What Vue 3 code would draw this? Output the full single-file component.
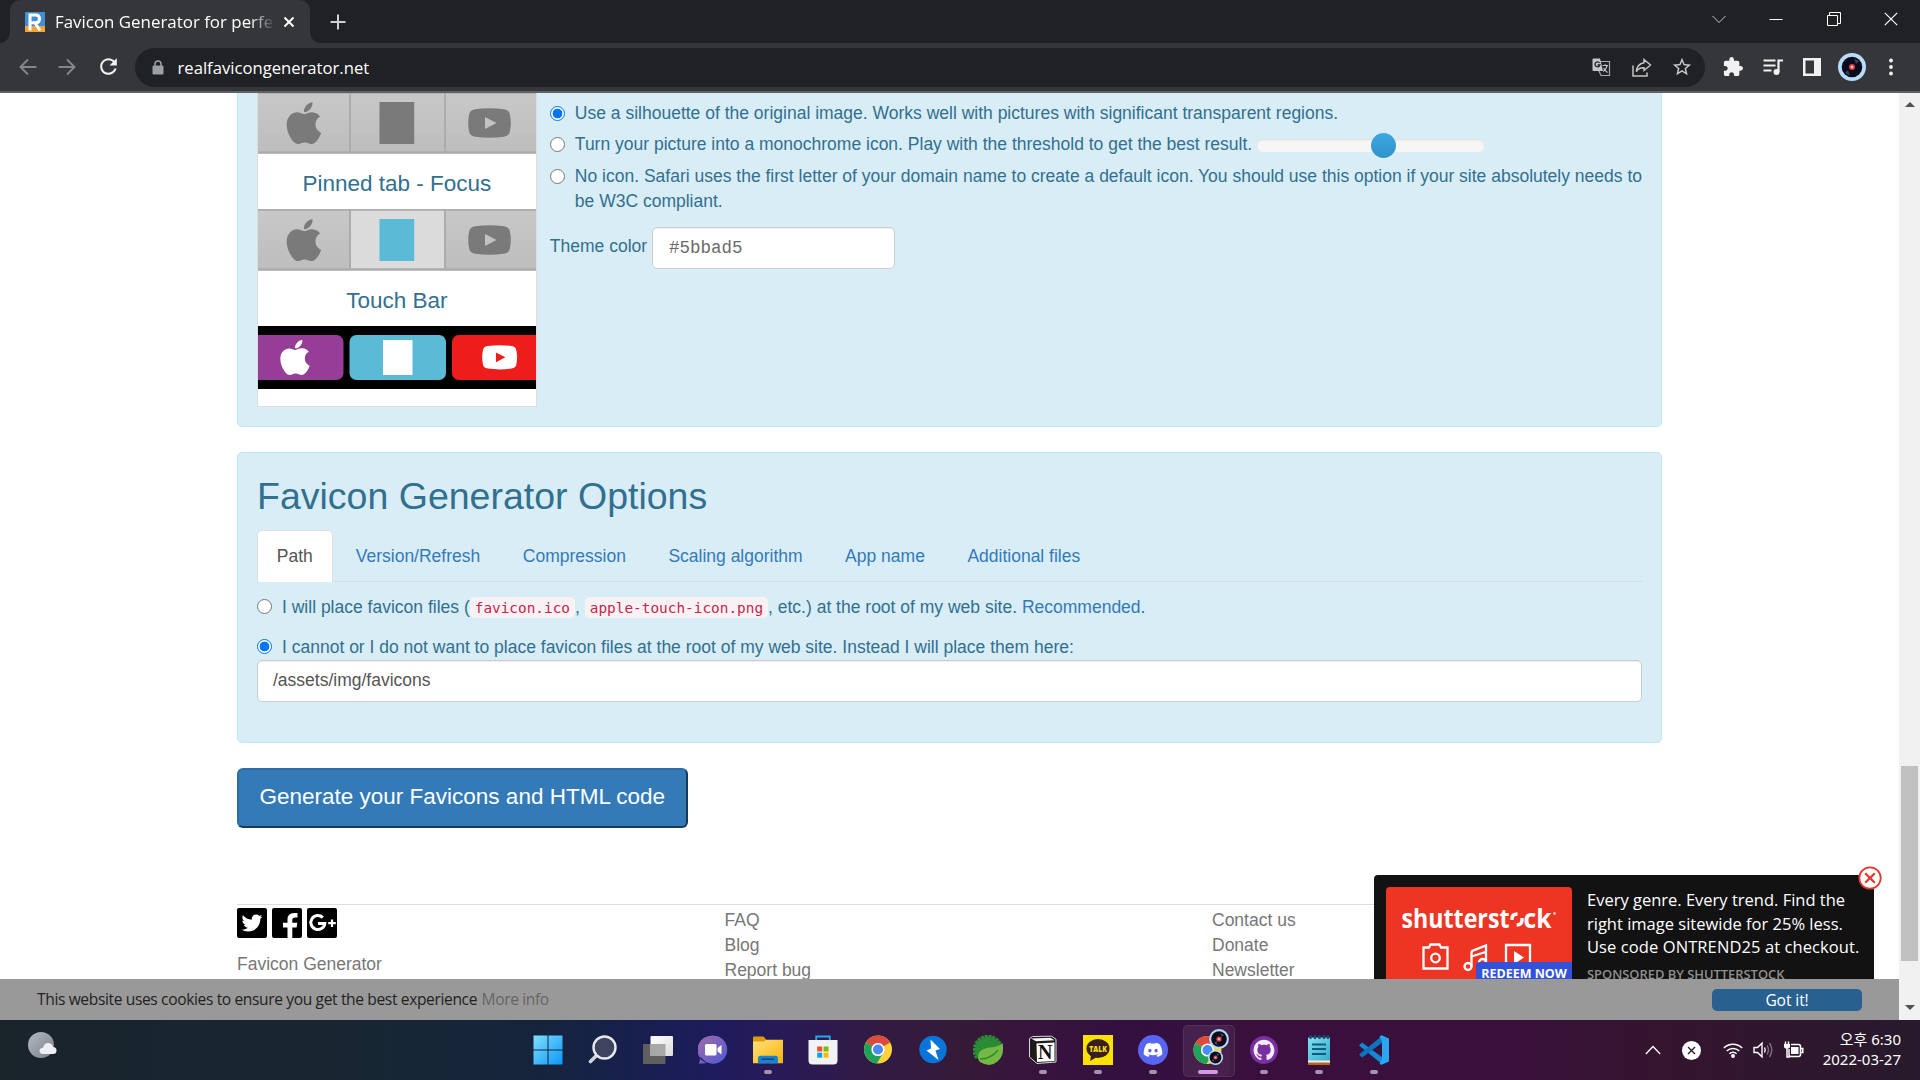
<script setup>
const tabs = ['Path', 'Version/Refresh', 'Compression', 'Scaling algorithm', 'App name', 'Additional files']
const apple = 'M318.7 268.7c-.2-36.7 16.4-64.4 50-84.8-18.8-26.9-47.2-41.7-84.7-44.6-35.5-2.8-74.3 20.7-88.5 20.7-15 0-49.4-19.7-76.4-19.7C63.3 141.2 4 184.8 4 273.5q0 39.3 14.4 81.2c12.8 36.7 59 126.7 107.2 125.2 25.2-.6 43-17.9 75.8-17.9 31.8 0 48.3 17.9 76.4 17.9 48.6-.7 90.4-82.5 102.6-119.3-65.2-30.7-61.7-90-61.7-91.9zm-56.6-164.2c27.3-32.4 24.8-61.9 24-72.5-24.1 1.4-52 16.4-67.9 34.9-17.5 19.8-27.8 44.3-25.6 71.9 26.1 2 49.9-11.4 69.5-34.3z'
const youtube = 'M7 1.2Q21.5-.8 36 1.2q5.6.8 6 6Q43.6 15 42 22.8q-.4 5.2-6 6Q21.5 30.8 7 28.8q-5.6-.8-6-6Q-.6 15 1 7.2q.4-5.2 6-6zM17 9v12l11.5-6z'
const pinnedRows = [false, true]
const gear = Array.from({ length: 12 }, (_, i) => 150 + i * 16)
const badges = [[12, 10, 1], [8.5, 28.5, 0.76]]
</script>

<template>
  <div class="screen">
    <header class="strip">
      <div class="tab">
        <svg class="fav" width="20" height="20" viewBox="0 0 20 20"><rect width="20" height="14" fill="#3f8fd2" /><rect y="14" width="20" height="6" fill="#f0a63c" /><path d="M5 18.500V3h5.500q4 0 4 3.900 0 3.800-4 3.900H6M10 11l5 7.500" fill="none" stroke="#fff" stroke-width="3" /></svg>
        <span class="title">Favicon Generator for perfe</span>
        <svg width="12" height="12" viewBox="0 0 12 12"><path d="M1.500 1.500l9 9m0-9l-9 9" stroke="#fff" stroke-width="1.900" /></svg>
      </div>
      <svg class="plus" width="16" height="16" viewBox="0 0 16 16"><path d="M8 .5v15M.5 8h15" stroke="#d0d1d4" stroke-width="2" /></svg>
      <div class="win">
        <svg width="14" height="14" viewBox="0 0 14 14"><path d="M.5 4l6.500 6.500L13.500 4" stroke="#c9cacc" /></svg>
        <svg width="14" height="14" viewBox="0 0 14 14"><path d="M.5 7.500h13" stroke="#fff" /></svg>
        <svg width="14" height="14" viewBox="0 0 14 14"><path d="M.5 3.500h10v10H.5zM2.500 3V.5h11v11H11" stroke="#fff" /></svg>
        <svg width="14" height="14" viewBox="0 0 14 14"><path d="M.8.8l12.400 12.400m0-12.400L.8 13.200" stroke="#fff" stroke-width="1.200" /></svg>
      </div>
    </header>

    <div class="toolbar">
      <div class="nav">
        <svg width="18" height="18" viewBox="0 0 18 18"><path d="M17.500 9H2M9 1.500L1.500 9 9 16.500" fill="none" stroke="#85868a" stroke-width="1.900" /></svg>
        <svg width="18" height="18" viewBox="0 0 18 18"><path d="M.5 9H16M9 1.500L16.500 9 9 16.500" fill="none" stroke="#85868a" stroke-width="1.900" /></svg>
        <svg width="25" height="25" viewBox="0 0 24 24"><path fill="#f1f1f2" d="M17.650 6.350C16.200 4.900 14.210 4 12 4c-4.420 0-7.990 3.580-7.990 8s3.570 8 7.990 8c3.730 0 6.840-2.550 7.730-6h-2.080c-.82 2.330-3.040 4-5.650 4-3.310 0-6-2.690-6-6s2.690-6 6-6c1.660 0 3.140.69 4.220 1.780L13 11h7V4l-2.350 2.350z" /></svg>
      </div>
      <div class="omni">
        <svg width="12" height="15" viewBox="0 0 12 15"><rect x=".5" y="5.500" width="11" height="9" rx="1.200" fill="#9aa0a6" /><path d="M3 6V4a3 3 0 016 0v2" fill="none" stroke="#9aa0a6" stroke-width="1.500" /></svg>
        <span class="url">realfavicongenerator.net</span>
        <div class="oicons">
          <svg width="19" height="19" viewBox="0 0 19 19"><path d="M8 3.500h9.500v14H9L6.500 12" fill="none" stroke="#a9aaad" stroke-width="1.200" /><path d="M1.500.5H8l3 12.500H1.500q-1 0-1-1V1.500q0-1 1-1z" fill="#c5c6c8" /><path d="M7.600 5A2.500 2.500 0 107.900 7H5.600" fill="none" stroke="#202124" stroke-width="1.300" /><path d="M10.500 7.500H16m-2.800-1.300v1.300m2 0q-1 4-4 6m.3-3.500q1.500 3 4 4.500" fill="none" stroke="#c5c6c8" stroke-width="1.100" /></svg>
          <svg width="20" height="19" viewBox="0 0 20 19"><path d="M1 7.500V18h14v-3.500M12 1.500l6.500 5.500-6.500 5.500V9.800Q7 9.500 4.300 13.500 5 6 12 4.700z" fill="none" stroke="#c3c4c6" stroke-width="1.500" /></svg>
          <svg width="22" height="22" viewBox="0 0 24 24"><path fill="#c9cacc" d="M22 9.240l-7.190-.62L12 2 9.190 8.630 2 9.240l5.460 4.730L5.820 21 12 17.270 18.180 21l-1.630-7.030L22 9.240zM12 15.400l-3.760 2.270 1-4.280-3.320-2.880 4.380-.38L12 6.100l1.710 4.040 4.380.38-3.320 2.880 1 4.280L12 15.400z" /></svg>
        </div>
      </div>
      <div class="ext">
        <svg width="20" height="20" viewBox="1 1 22 22"><path fill="#f1f1f2" d="M20.500 11H19V7c0-1.100-.9-2-2-2h-4V3.500C13 2.120 11.880 1 10.500 1S8 2.120 8 3.500V5H4c-1.100 0-1.990.9-1.990 2v3.800H3.500c1.490 0 2.700 1.210 2.700 2.700s-1.210 2.700-2.700 2.700H2V20c0 1.100.9 2 2 2h3.800v-1.500c0-1.490 1.210-2.700 2.700-2.700 1.490 0 2.700 1.210 2.700 2.700V22H17c1.100 0 2-.9 2-2v-4h1.500c1.380 0 2.500-1.120 2.500-2.500S21.880 11 20.500 11z" /></svg>
        <svg width="20" height="18" viewBox="0 0 20 18"><path d="M.5 2.500h12M.5 7.500h12M.5 12.500h8" stroke="#f1f1f2" stroke-width="2.200" /><path d="M15.500 14V2.500H20" fill="none" stroke="#f1f1f2" stroke-width="2.200" /><circle cx="13.500" cy="14" r="3" fill="#f1f1f2" /></svg>
        <svg width="18" height="18" viewBox="0 0 18 18"><path d="M0 0h18v18H0zM2.500 2.500v13H11v-13z" fill-rule="evenodd" fill="#f1f1f2" /></svg>
        <svg width="28" height="28" viewBox="0 0 28 28"><circle cx="14" cy="14" r="14" fill="#b7dcf8" /><circle cx="14" cy="14" r="10.300" fill="#0a0b1c" /><path d="M16 5.500l5 2.500-3 3zM12 22.500l-5-2.500 3-3z" fill="#3d3f55" /><circle cx="14" cy="14" r="3" fill="#e8335d" /><circle cx="14" cy="14" r="1.400" fill="#ffd15c" /></svg>
        <svg width="4" height="18" viewBox="0 0 4 18"><circle cx="2" cy="2.500" r="1.900" fill="#f1f1f2" /><circle cx="2" cy="9" r="1.900" fill="#f1f1f2" /><circle cx="2" cy="15.500" r="1.900" fill="#f1f1f2" /></svg>
      </div>
    </div>

    <div class="view">
      <main class="page">
        <section class="panel first">
          <div class="preview">
            <template v-for="focus in pinnedRows" :key="focus">
              <h4 v-if="focus">Pinned tab - Focus</h4>
              <svg class="strip-img" :class="{ cut: !focus }" width="278" height="62" viewBox="0 0 278 62">
                <defs><linearGradient id="steel" x2="0" y2="1"><stop stop-color="#c8c8c8" /><stop offset="1" stop-color="#bdbdbd" /></linearGradient></defs>
                <rect width="278" height="62" fill="url(#steel)" />
                <rect v-if="focus" x="93" width="93" height="62" fill="#dadbda" />
                <path d="M0 .8h278M0 60.300h278M92 0v60M187 0v60" stroke="#acacac" stroke-width="2" />
                <path d="M0 61.700h278" stroke="#b9c0b4" stroke-width="1" />
                <path :d="apple" fill="#7a7a7a" transform="translate(28.300 7.200) scale(.0915 .0935)" />
                <rect x="121.500" y="10" width="34.700" height="42" :fill="focus ? '#5bbad5' : '#7a7a7a'" />
                <path :d="youtube" fill="#7a7a7a" fill-rule="evenodd" transform="translate(210 16)" />
              </svg>
            </template>
            <h4>Touch Bar</h4>
            <svg class="strip-img" width="278" height="63" viewBox="0 0 278 63">
              <rect width="278" height="63" />
              <rect x="-20" y="9" width="105.500" height="45" rx="7" fill="#963d97" />
              <rect x="91.500" y="9" width="96.500" height="45" rx="7" fill="#5bbad5" />
              <rect x="194" y="9" width="110" height="45" rx="7" fill="#ef1c1c" />
              <path :d="apple" fill="#fff" transform="translate(22 11.500) scale(.078)" />
              <rect x="125" y="14" width="29.500" height="35" fill="#fff" />
              <path :d="youtube" fill="#fff" fill-rule="evenodd" transform="translate(224 19) scale(.82)" />
            </svg>
          </div>
          <div class="opts">
            <div class="radio"><i class="dot on"></i><span>Use a silhouette of the original image. Works well with pictures with significant transparent regions.</span></div>
            <div class="radio"><i class="dot"></i><span>Turn your picture into a monochrome icon. Play with the threshold to get the best result.</span><div class="slider"><b></b></div></div>
            <div class="radio last"><i class="dot"></i><span>No icon. Safari uses the first letter of your domain name to create a default icon. You should use this option if your site absolutely needs to<br>be W3C compliant.</span></div>
            <div class="theme"><span>Theme color</span><div class="field mono">#5bbad5</div></div>
          </div>
        </section>

        <section class="panel second">
          <h2>Favicon Generator Options</h2>
          <nav class="tabs"><a v-for="(t, i) in tabs" :key="t" :class="{ active: i === 0 }">{{ t }}</a></nav>
          <div class="radio path"><i class="dot"></i><span>I will place favicon files (<code>favicon.ico</code>, <code>apple-touch-icon.png</code>, etc.) at the root of my web site. <a>Recommended</a>.</span></div>
          <div class="radio path"><i class="dot on"></i><span>I cannot or I do not want to place favicon files at the root of my web site. Instead I will place them here:</span></div>
          <div class="field wide">/assets/img/favicons</div>
        </section>

        <div class="generate">Generate your Favicons and HTML code</div>

        <footer>
          <div>
            <div class="social">
              <svg width="30" height="30" viewBox="0 0 30 30"><rect width="30" height="30" rx="2" /><path fill="#fff" transform="translate(4.500 4.500) scale(.041)" d="M459.370 151.716c.325 4.548.325 9.097.325 13.645 0 138.720-105.583 298.558-298.558 298.558-59.452 0-114.680-17.219-161.137-47.106 8.447.974 16.568 1.299 25.340 1.299 49.055 0 94.213-16.568 130.274-44.832-46.132-.975-84.792-31.188-98.112-72.772 6.498.974 12.995 1.624 19.818 1.624 9.421 0 18.843-1.300 27.614-3.573-48.081-9.747-84.143-51.980-84.143-102.985v-1.299c13.969 7.797 30.214 12.670 47.431 13.319-28.264-18.843-46.781-51.005-46.781-87.391 0-19.492 5.197-37.360 14.294-52.954 51.655 63.675 129.300 105.258 216.365 109.807-1.624-7.797-2.599-15.918-2.599-24.040 0-57.828 46.782-104.934 104.934-104.934 30.213 0 57.502 12.670 76.670 33.137 23.715-4.548 46.456-13.320 66.599-25.340-7.798 24.366-24.366 44.833-46.132 57.827 21.117-2.273 41.584-8.122 60.426-16.243-14.292 20.791-32.161 39.308-52.628 54.253z" /></svg>
              <svg width="30" height="30" viewBox="0 0 30 30"><rect width="30" height="30" rx="2" /><path d="M15.500 30V19.500H11v-4.700h4.500v-3.300Q15.500 5 22 5h3.500v4.500H23q-2.700 0-2.700 2.500v2.800h5l-.7 4.700h-4.300V30z" fill="#fff" /></svg>
              <svg width="30" height="30" viewBox="0 0 30 30"><rect width="30" height="30" rx="2" /><path d="M15.800 9.600A7 7 0 1017.800 15.500H11" fill="none" stroke="#fff" stroke-width="3" /><path d="M25 11.500v7.500M21.200 15.200h7.600" stroke="#fff" stroke-width="2.200" /></svg>
            </div>
            <p>Favicon Generator</p>
          </div>
          <ul><li>FAQ</li><li>Blog</li><li>Report bug</li></ul>
          <ul><li>Contact us</li><li>Donate</li><li>Newsletter</li></ul>
        </footer>

        <aside class="ad">
          <div class="art">
            <svg width="186" height="92" viewBox="0 0 186 92">
              <g fill="#fff" font-family="Open Sans, sans-serif" font-weight="700" font-size="27.500">
                <text x="15.500" y="40.500" textLength="108" lengthAdjust="spacingAndGlyphs">shutterst</text>
                <text x="137.500" y="40.500" textLength="28" lengthAdjust="spacingAndGlyphs">ck</text>
              </g>
              <path d="M126 33v-1.500q0-4.500 5.500-4.500M136 31v2.300q0 4.700-5.300 4.700" fill="none" stroke="#fff" stroke-width="3.400" />
              <circle cx="168.500" cy="26.500" r="1.400" fill="#fbb" />
              <g fill="none" stroke="#fff" stroke-width="2.300">
                <path d="M37.500 60.500h5.500l1.500-3h9l1.500 3h6.500v21h-24z" /><circle cx="49.500" cy="71" r="4.300" />
                <circle cx="82" cy="79.500" r="3.500" /><circle cx="96.500" cy="75.500" r="3.500" /><path d="M85.500 79.500V66q0-2 2-2.600L100 58.500v17M85.500 69.500l14-4.500" />
                <path d="M120 58h24v24h-24z" />
              </g>
              <path d="M128 64v13l10-6.500z" fill="#fff" />
            </svg>
            <span class="redeem">REDEEM NOW</span>
          </div>
          <div class="copy">Every genre. Every trend. Find the<br>right image sitewide for 25% less.<br><span>Use code ONTREND25 at checkout.</span><small>SPONSORED BY SHUTTERSTOCK</small></div>
          <svg class="x" width="24" height="24" viewBox="0 0 24 24"><circle cx="12" cy="12" r="10.700" fill="#fff" stroke="#e5392b" stroke-width="1.800" /><path d="M7.200 7.200l9.600 9.600m0-9.600l-9.600 9.600" stroke="#e5392b" stroke-width="2.300" /></svg>
        </aside>

        <div class="cookies"><span class="msg">This website uses cookies to ensure you get the best experience</span><span class="more">More info</span><span class="got">Got it!</span></div>
      </main>
      <div class="scroll">
        <svg width="10" height="5" viewBox="0 0 10 5"><path d="M0 5l5-5 5 5z" fill="#505050" /></svg>
        <i></i>
        <svg class="down" width="10" height="5" viewBox="0 0 10 5"><path d="M0 0l5 5 5-5z" fill="#505050" /></svg>
      </div>
    </div>

    <div class="taskbar">
      <svg class="weather" width="30" height="28" viewBox="0 0 30 28"><defs><linearGradient id="moon" x2="1" y2="1"><stop stop-color="#b4b9c4" /><stop offset="1" stop-color="#7b818b" /></linearGradient></defs><circle cx="13" cy="14" r="13" fill="url(#moon)" /><path d="M15 23q-3.500 0-3.500-3t3.500-3.300Q16 12 20 12t5 4q3.500 0 3.500 3.500T25 23z" fill="#eef0f4" /></svg>
      <div class="apps">
        <div class="app"><svg viewBox="0 0 30 30"><defs><linearGradient id="wn" x2="1" y2="1"><stop stop-color="#7fe0ff" /><stop offset="1" stop-color="#0a96f8" /></linearGradient></defs><path d="M.5.500h14v14H.5zM15.500.500h14v14h-14zM.5 15.500h14v14H.5zM15.500 15.500h14v14h-14z" fill="url(#wn)" /></svg></div>
        <div class="app"><svg viewBox="0 0 30 30"><path d="M8.500 20.500L2.500 26.500" stroke="#cfd3d8" stroke-width="3.600" stroke-linecap="round" /><circle cx="16.500" cy="12.500" r="11" fill="#3e4460" stroke="#e8eaed" stroke-width="2.400" /></svg></div>
        <div class="app"><svg viewBox="0 0 30 30"><defs><linearGradient id="tv" x2="1" y2="1"><stop stop-color="#fff" /><stop offset="1" stop-color="#dcdcdc" /></linearGradient></defs><rect x="0" y="9" width="22.500" height="20" rx="1" fill="#5f5f5f" /><rect x="7.500" y="1" width="22.500" height="20" rx="1" fill="url(#tv)" /><path d="M7.500 9h15v12h-15z" fill="#a8a8a8" /></svg></div>
        <div class="app"><svg viewBox="0 0 30 30"><defs><linearGradient id="ch" x2="1" y2="1"><stop stop-color="#a06ba8" /><stop offset="1" stop-color="#5059d8" /></linearGradient></defs><path d="M15 .8A14 14 0 112.900 21.500L1 28.800l8-.8A14 14 0 0115 .8z" fill="url(#ch)" /><circle cx="15" cy="14.500" r="13.800" fill="url(#ch)" /><rect x="7" y="9" width="11.500" height="11.500" rx="1.500" fill="#fff" /><path d="M19.500 13l4-3v9.500l-4-3z" fill="#fff" /></svg></div>
        <div class="app run"><svg viewBox="0 0 30 30"><defs><linearGradient id="fo" x2="1" y2="1"><stop stop-color="#ffe07a" /><stop offset="1" stop-color="#f8b50a" /></linearGradient></defs><path d="M0 2.500q0-1 1-1h9.500l3 3.500v5H0z" fill="#dd9b0b" /><path d="M0 6.500h11l2-1.800h17v23.500H0z" fill="url(#fo)" /><path d="M5 28.200v-5q0-2.500 2.500-2.500h15q2.500 0 2.500 2.500v5z" fill="#1a82d2" /><path d="M8.500 24.200h13" stroke="#0c4a80" stroke-width="1.500" /></svg></div>
        <div class="app"><svg viewBox="0 0 30 30"><path d="M8.200 6V1.500h13.600V6" fill="none" stroke="#27a9e8" stroke-width="1.800" /><path d="M.5 5h29v20.500q0 4-4 4h-21q-4 0-4-4z" fill="#f1f2f3" /><path d="M9.200 11.500h5v5h-5z" fill="#f25022" /><path d="M15.500 11.500h5v5h-5z" fill="#7fba00" /><path d="M9.200 17.700h5v5h-5z" fill="#00a4ef" /><path d="M15.500 17.700h5v5h-5z" fill="#ffb900" /></svg></div>
        <div class="app"><svg viewBox="0 0 30 30"><circle cx="15" cy="14.500" r="14" fill="#fdd33b" /><path d="M15 14.500L2.900 7.500a14 14 0 0112-7q8.300 0 12.300 7z" fill="#dc4a3d" /><path d="M2.900 7.500a14 14 0 0011 21l6.500-11L15 14.500z" fill="#1fa35c" /><circle cx="15" cy="14.500" r="6.600" fill="#fff" /><circle cx="15" cy="14.500" r="5" fill="#4a8af4" /></svg></div>
        <div class="app"><svg viewBox="0 0 30 30"><circle cx="15" cy="14.500" r="13.700" fill="#0a74d8" /><path d="M12.500 4.500l9.500 9.500-4.500 1.500 3 9.500-12-9.500 4.500-2z" fill="#fff" /></svg></div>
        <div class="app"><svg viewBox="0 0 30 30"><circle cx="15" cy="15" r="13" fill="#2b8a34" /><rect v-for="a in gear" :key="a" x="27" y="13.500" width="3.200" height="3.200" fill="#2b8a34" :transform="`rotate(${a} 15 15)`" /><path d="M29.500 8q2.500 12-5 18.500T7 27Q4 24 5.500 19T16 12.500q8 0 13.500-4.500z" fill="#74b943" /><path d="M7 24q11 0 18-9" fill="none" stroke="#2b8a34" stroke-width="1.300" /></svg></div>
        <div class="app run"><svg viewBox="0 0 30 30"><path d="M1.500 3.500L4.500 1.500l19-.3 4.500 3V27L9 28.500 1.500 22z" fill="#1c1c1c" stroke="#d8d8d8" stroke-width="1" /><path d="M3 3.500l19.500-.8 4 2.500-18.500 1z" fill="#f4f4f4" /><path d="M8.500 8.500l18-1v18.500L9 27z" fill="#fff" /><text x="10" y="24" font-family="Liberation Serif, serif" font-weight="700" font-size="20" fill="#111">N</text></svg></div>
        <div class="app run"><svg viewBox="0 0 30 30"><path d="M0 0h30v30H0z" fill="#fae100" /><ellipse cx="15" cy="13.500" rx="11.500" ry="9.500" fill="#381e1e" /><path d="M8 20l-.8 6 6.500-4z" fill="#381e1e" /><text x="6.300" y="17" font-family="Open Sans, sans-serif" font-weight="800" font-size="8.500" fill="#fae100" textLength="17.500" lengthAdjust="spacingAndGlyphs">TALK</text></svg></div>
        <div class="app run"><svg viewBox="0 0 30 30"><circle cx="15" cy="15" r="15" fill="#5865f2" /><path fill="#fff" transform="translate(5.700 5.500) scale(.775)" d="M20.317 4.370a19.791 19.791 0 00-4.885-1.515.074.074 0 00-.079.037c-.211.375-.445.865-.608 1.250-1.845-.276-3.680-.276-5.487 0-.164-.393-.406-.874-.618-1.250a.077.077 0 00-.079-.037 19.736 19.736 0 00-4.885 1.515.070.070 0 00-.032.028C.533 9.046-.319 13.580.099 18.058a.082.082 0 00.031.056c2.053 1.508 4.041 2.423 5.993 3.029a.078.078 0 00.084-.028c.462-.630.873-1.295 1.226-1.994a.076.076 0 00-.042-.106c-.653-.248-1.274-.550-1.872-.892a.077.077 0 01-.008-.128c.126-.094.252-.192.372-.291a.074.074 0 01.078-.011c3.928 1.793 8.180 1.793 12.061 0a.074.074 0 01.079.010c.120.099.246.198.373.292a.077.077 0 01-.007.128 12.299 12.299 0 01-1.873.891.077.077 0 00-.041.107c.360.698.772 1.363 1.225 1.993a.076.076 0 00.084.029c1.961-.607 3.950-1.522 6.002-3.029a.077.077 0 00.031-.055c.500-5.177-.838-9.674-3.549-13.660a.061.061 0 00-.031-.029zM8.020 15.331c-1.183 0-2.157-1.086-2.157-2.419s.956-2.419 2.157-2.419c1.211 0 2.176 1.095 2.157 2.419 0 1.333-.956 2.419-2.157 2.419zm7.975 0c-1.183 0-2.157-1.086-2.157-2.419s.955-2.419 2.157-2.419c1.211 0 2.176 1.095 2.157 2.419 0 1.333-.946 2.419-2.157 2.419z" /></svg></div>
        <div class="app run current"><svg viewBox="0 0 30 30"><circle cx="14.500" cy="15" r="14" fill="#fdd33b" /><path d="M14.500 15L2.400 8a14 14 0 0112-7q8.300 0 12.300 7z" fill="#dc4a3d" /><path d="M2.400 8a14 14 0 0011 21l6.500-11-5.400-3z" fill="#1fa35c" /><circle cx="14.500" cy="15" r="6.600" fill="#fff" /><circle cx="14.500" cy="15" r="5" fill="#4a8af4" /></svg>
          <svg class="badge" width="24" height="38" viewBox="0 0 24 38"><g v-for="b in badges" :key="b[0]" :transform="`translate(${b[0]} ${b[1]}) scale(${b[2]})`"><circle r="9.900" fill="#b7dcf8" /><circle r="7.800" fill="#0b0c1e" /><path d="M1.500-6l3.500 2-2.500 2zM-1.500 6l-3.500-2 2.500-2z" fill="#4a4c60" /><circle r="2.600" fill="#e4405f" /><circle r="1.100" fill="#ffd15c" /></g></svg>
        </div>
        <div class="app run"><svg viewBox="0 0 30 30"><circle cx="15" cy="15" r="14" fill="#7a2fa0" /><path fill="#f2ecf7" transform="translate(4.600 4.800) scale(1.300)" d="M8 0C3.580 0 0 3.580 0 8c0 3.540 2.290 6.530 5.470 7.590.4.070.55-.17.55-.38 0-.19-.010-.82-.010-1.490-2.010.37-2.530-.49-2.690-.94-.090-.23-.48-.94-.82-1.130-.28-.15-.68-.52-.010-.53.63-.010 1.080.58 1.230.82.72 1.210 1.870.87 2.330.66.070-.52.28-.87.51-1.070-1.780-.2-3.640-.89-3.640-3.950 0-.87.31-1.590.82-2.150-.080-.2-.36-1.020.080-2.120 0 0 .67-.21 2.200.82.64-.18 1.320-.27 2-.27.68 0 1.360.090 2 .27 1.530-1.040 2.200-.82 2.200-.82.44 1.100.16 1.920.080 2.120.51.56.82 1.270.82 2.150 0 3.070-1.870 3.750-3.650 3.950.29.25.54.73.54 1.480 0 1.070-.010 1.930-.010 2.200 0 .21.15.46.55.38A8.013 8.013 0 0016 8c0-4.420-3.580-8-8-8z" /></svg></div>
        <div class="app run"><svg viewBox="0 0 30 30"><defs><linearGradient id="np" x2="1" y2="1"><stop stop-color="#7fe3f3" /><stop offset="1" stop-color="#39a9cb" /></linearGradient></defs><path d="M4 25h22v5H4z" fill="#b5651d" /><path d="M4 24h22v3.500H4z" fill="#f4f1ea" /><path d="M4 2.500h22v23H4z" fill="url(#np)" /><path d="M8 9.500h14M8 14h14M8 19h14" stroke="#0f5c7d" stroke-width="1.800" /><path d="M6.500 0v4M11 0v4M15.500 0v4M20 0v4M24 0v4" stroke="#14506e" stroke-width="2" /></svg></div>
        <div class="app run"><svg viewBox="0 0 30 30"><path d="M0 10.500L3 7.500 23.500 22.500v7z" fill="#1489d3" /><path d="M0 19.500L3 22.500 23.500 7.500V.5z" fill="#0a74bd" /><path d="M22.500.2L30 3.500v23l-7.500 3.300-2-1 2.500-5V6.500l-2.500-5z" fill="#2aa7f2" /></svg></div>
      </div>
      <div class="tray">
        <svg width="16" height="16" viewBox="0 0 16 16"><path d="M.8 12L8 4.500l7.200 7.500" stroke="#fff" stroke-width="1.300" fill="none" /></svg>
        <svg width="19" height="19" viewBox="0 0 19 19"><circle cx="9.500" cy="9.500" r="9.500" fill="#fff" /><path d="M6 6l7 7m0-7l-7 7" stroke="#2b1a30" stroke-width="1.400" /></svg>
        <svg width="20" height="16" viewBox="0 0 20 16" fill="none" stroke="#fff" stroke-width="1.500"><path d="M.8 6a13 13 0 0118.400 0M3.700 9a9 9 0 0112.600 0M6.400 11.800a5 5 0 017.200 0" /><circle cx="10" cy="14" r="1.200" fill="#fff" /></svg>
        <svg width="20" height="18" viewBox="0 0 20 18" fill="none" stroke="#fff" stroke-width="1.400"><path d="M1 6.500h3.500L9 2.200v13.600l-4.500-4.300H1zM11.500 6.500q1.500 2.500 0 5" /><path d="M14 4.500q3 4.500 0 9M16.500 2q4.500 7 0 14" stroke="#7d6c80" /></svg>
        <svg width="21" height="18" viewBox="0 0 21 18" fill="none" stroke="#fff" stroke-width="1.500"><path d="M8 3.500h7.500q2 0 2 2v8q0 2-2 2H8q-2 0-2-2V8" /><path d="M8 6h7.500v7H8z" fill="#fff" stroke="none" /><path d="M18 7.500h1.800v4H18M2.500.5V3M5.500.5V3" /><path d="M1 3h6v2.500q0 2-3 2T1 5.500z" fill="#fff" stroke="none" /><path d="M4 7v9h3" /></svg>
        <div class="clock">오후 6:30<br>2022-03-27</div>
      </div>
    </div>
  </div>
</template>

<style>
body { overflow: hidden; }
</style>

<style scoped>
* { box-sizing: border-box; }
svg { display: block; flex: none; }
.screen { width: 1920px; height: 1080px; display: flex; flex-direction: column; overflow: hidden; background: #fff; font: 17.5px/25px "Liberation Sans", Arial, sans-serif; white-space: nowrap; }

.strip { height: 43px; background: #202124; display: flex; align-items: flex-start; }
.tab { position: relative; margin-left: 10px; width: 300px; height: 43px; background: #35363a; border-radius: 10px 10px 0 0; display: flex; align-items: center; padding: 0 15px; }
.tab::before, .tab::after { content: ""; position: absolute; bottom: 0; width: 10px; height: 10px; }
.tab::before { left: -10px; background: radial-gradient(circle at 0 0, transparent 9.5px, #35363a 10px); }
.tab::after { right: -10px; background: radial-gradient(circle at 100% 0, transparent 9.5px, #35363a 10px); }
.title { margin-left: 10px; width: 220px; margin-right: 9px; overflow: hidden; font: 16.9px/42px "Open Sans", sans-serif; color: #fff; -webkit-mask-image: linear-gradient(90deg, #000 195px, transparent 220px); mask-image: linear-gradient(90deg, #000 195px, transparent 220px); }
.plus { margin: 13.5px 0 0 20px; }
.win { margin-left: auto; margin-right: 22px; height: 37px; display: flex; align-items: center; gap: 43.5px; }
.win svg { fill: none; }

.toolbar { height: 50px; background: #35363a; border-bottom: 2px solid #606165; display: flex; align-items: center; padding-top: 1px; }
.nav { display: flex; align-items: center; gap: 20.5px; padding-left: 19px; width: 135px; }
.nav svg { margin-top: -2px; }
.omni { width: 1570px; height: 39px; border-radius: 20px; background: #202124; display: flex; align-items: center; padding: 0 12px 0 16.5px; }
.url { margin-left: 14px; font: 16.65px/39px "Open Sans", sans-serif; color: #fff; }
.oicons { margin-left: auto; display: flex; align-items: center; gap: 20.5px; }
.oicons svg { margin-top: -1px; }
.oicons svg:nth-child(3) { margin-left: -1px; }
.ext { display: flex; align-items: center; padding-left: 17.5px; gap: 20px; }
.ext svg { margin-top: -1px; }
.ext svg:nth-child(4) { margin-left: -3px; }
.ext svg:nth-child(5) { margin-left: 3px; }

.view { height: 927px; display: flex; }
.page { position: relative; width: 1899px; height: 927px; overflow: hidden; padding-left: 237px; }
.panel { width: 1425px; border: 1px solid #bce8f1; border-radius: 5px; background: #d9edf7; color: #31708f; padding: 0 19px; }
.first { height: 334px; border-top: 0; border-radius: 0 0 5px 5px; display: flex; }
.preview { width: 280px; height: 314px; border: 1px solid #ddd; border-top: 0; background: #fff; overflow: hidden; }
.cut { margin-top: -1px; }
h4 { margin: 0; height: 55px; font-size: 22.5px; font-weight: 400; line-height: 59px; text-align: center; }
.opts { margin-left: 13px; padding-top: 7.5px; }
.radio { display: flex; margin-bottom: 6.25px; }
.radio.last span { padding-top: 1px; }
.dot { flex: none; width: 15px; height: 15px; margin: 5.5px 10px 0 0; border-radius: 50%; border: 1.5px solid #767676; background: #fff; }
.dot.on { border-color: #0075ff; background: radial-gradient(circle, #0075ff 4.6px, #fff 5.2px); }
.slider { margin: 7px 0 0 5px; width: 226.5px; height: 13px; border-radius: 5px; background: #f6f6f6; box-shadow: inset 0 1px 2px rgba(0,0,0,.1); padding-left: 114px; }
.slider b { display: block; width: 25px; height: 25px; margin-top: -6px; border-radius: 50%; background: linear-gradient(#3ba7e0, #2f94ca); }
.theme { display: flex; margin-top: 13px; }
.theme span { padding-top: 7px; }
.field { height: 42px; border: 1px solid #ccc; border-radius: 5px; background: #fff; color: #555; padding-left: 15px; line-height: 38px; box-shadow: inset 0 1px 1px rgba(0,0,0,.075); }
.mono { width: 243px; margin-left: 5px; padding-left: 16px; font-family: "Liberation Mono", monospace; line-height: 40px; color: #6a6a6a; }
.second { height: 291px; margin-top: 25px; }
h2 { margin: 23px 0 12px; font-size: 37.5px; line-height: 41.5px; font-weight: 400; }
.tabs { display: flex; gap: 3px; height: 52px; border-bottom: 1px solid #d5dde0; margin-bottom: 13px; }
.tabs a { height: 52px; padding: 13.5px 18.75px 0; border: 1px solid transparent; border-bottom: 0; color: #337ab7; }
.tabs .active { background: #fff; border-color: #ddd; border-radius: 5px 5px 0 0; color: #555; margin-right: .5px; }
.path { margin-bottom: 15px; }
.path .dot { margin: 4.5px 10px 0 0; }
.path + .path { margin-bottom: 0; }
.path a { color: #337ab7; }
code { font: 14.4px/18px "DejaVu Sans Mono", monospace; color: #c7254e; background: #f9f2f4; border-radius: 5px; padding: 2.5px 5px; }
.wide { width: 1385px; }
.generate { width: 451px; height: 60px; margin-top: 25px; padding-left: 20.5px; border: 2.5px solid; border-color: #2e6da4 #173a59 #173a59 #2e6da4; border-radius: 6px; background: #337ab7; color: #fff; font-size: 22.5px; line-height: 54px; }
footer { width: 1425px; margin-top: 76px; border-top: 1px solid #ddd; display: grid; grid-template-columns: 487.5px 487.5px 1fr; color: #777; }
.social { display: flex; gap: 5px; margin-top: 3px; }
footer p { margin: 14px 0 0; }
footer ul { margin: 3px 0 0; padding: 0; list-style: none; }

.ad { position: absolute; left: 1374px; top: 782px; width: 500px; height: 110px; background: #121212; border-radius: 4px 4px 0 0; display: flex; padding: 12px 0 0 12px; }
.art { position: relative; width: 186px; height: 98px; background: #ee3524; border-radius: 4px; }
.redeem { position: absolute; right: 0; top: 75px; width: 96px; height: 23px; border-radius: 4px 0 0 0; background: #3452d9; color: #fff; font: 700 12.5px/24px "Open Sans", sans-serif; text-align: center; }
.copy { margin-left: 15px; padding-top: 1px; color: #fff; font: 16.5px/23.5px "Open Sans", sans-serif; }
.copy span { letter-spacing: .09px; }
.copy small { display: block; margin-top: 6px; font: 600 12.9px/18px "Open Sans", sans-serif; color: #8f8f8f; }
.x { position: absolute; right: -8px; top: -9px; }
.cookies { position: absolute; left: 0; top: 886px; width: 1899px; height: 41px; background: #999; display: flex; align-items: center; padding: 0 37px; font: 15.6px/41px "Open Sans", sans-serif; color: #222; letter-spacing: -.38px; }
.more { margin-left: 4.5px; color: #666; }
.got { margin-left: auto; width: 150px; height: 22px; border-radius: 5px; background: #286090; color: #fff; line-height: 22px; text-align: center; letter-spacing: -.1px; }

.scroll { width: 21px; background: #f1f1f1; display: flex; flex-direction: column; align-items: center; padding: 9px 0 10px; }
.scroll i { width: 17px; height: 195px; margin-top: 659px; background: #c1c1c1; }
.down { margin-top: auto; }

.taskbar { position: relative; height: 60px; display: flex; align-items: center; background: linear-gradient(90deg, #19242b 0, #182632 340px, #15243c 540px, #171f50 650px, #1e1b5e 715px, #291a55 790px, #321a42 880px, #351a38 960px, #37153c 1020px, #33103f 1120px, #3a0f3e 1250px, #3a103c 1500px, #35142f 1650px, #281a2c 1920px); }
.weather { margin: -10px 0 0 28px; }
.apps { display: flex; margin-left: 462px; }
.app { position: relative; width: 55.08px; height: 60px; display: flex; justify-content: center; padding-top: 15px; }
.app svg { width: 30px; height: 30px; }
.run::after { content: ""; position: absolute; left: 23.5px; top: 50px; width: 8px; height: 4px; border-radius: 2px; background: #a592ae; }
.current { z-index: 0; }
.current::before { content: ""; position: absolute; z-index: -1; left: 2.5px; top: 5px; width: 50px; height: 50px; border-radius: 5px; background: #ffffff14; border: 1px solid #ffffff12; box-shadow: inset -5px 0 0 #00000018; }
.current::after { left: 17.5px; width: 20px; background: #d59ae3; }
.app .badge { position: absolute; left: 26px; top: 9px; width: 24px; height: 38px; }
.tray { margin-left: auto; margin-right: 19px; display: flex; align-items: center; }
.tray svg:nth-child(1) { margin-right: 21.5px; }
.tray svg:nth-child(2) { margin-right: 21.5px; }
.tray svg:nth-child(3) { margin-right: 10px; }
.tray svg:nth-child(4) { margin-right: 10px; }
.tray svg:nth-child(5) { margin-right: 19px; }
.clock { margin-top: -2px; text-align: right; color: #fff; font: 15px/20px "Noto Sans", "Noto Sans CJK KR", sans-serif; }
</style>
